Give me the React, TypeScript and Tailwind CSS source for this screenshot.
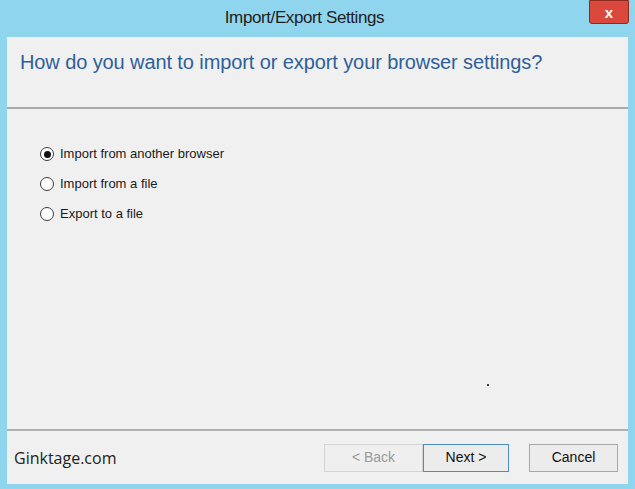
import React from "react";

function Radio({ checked, label }: { checked?: boolean; label: string }) {
  return (
    <div className="flex items-center gap-[6px] h-[20px]">
      <span className="w-[14px] h-[14px] rounded-full border border-[#3a3a3a] bg-white flex items-center justify-center">
        {checked && <span className="w-[7px] h-[7px] rounded-full bg-[#111]" />}
      </span>
      <span className="text-[13px] text-[#1a1a1a]">{label}</span>
    </div>
  );
}

export default function App() {
  return (
    <div
      className="w-[635px] h-[489px] bg-[#8fd5ee] flex flex-col overflow-hidden"
      style={{ fontFamily: '"Liberation Sans", Arial, sans-serif' }}
    >
      {/* title bar */}
      <div className="relative h-[37px] shrink-0 flex items-center justify-center pr-[26px]">
        <span className="text-[17px] text-[#1e1e1e] mt-[-1px] tracking-[-0.4px]">Import/Export Settings</span>
        <div className="absolute right-[6px] top-0 w-[40px] h-[24px] bg-[#d9483b] border border-[#8a2a22] rounded-b-[3px] flex items-center justify-center">
          <span className="text-white font-bold text-[15px] leading-none">x</span>
        </div>
      </div>
      {/* body */}
      <div className="flex-1 mx-[7px] mb-[5px] bg-[#f0f0f0] flex flex-col">
        <div className="h-[72px] border-b-2 border-[#a9a9a9] pt-[10px] pl-[13px]">
          <span className="text-[20px] text-[#2f5f99] tracking-[-0.1px]">
            How do you want to import or export your browser settings?
          </span>
        </div>
        <div className="flex-1 flex flex-col gap-[10px] pt-[35px] pl-[33px] relative">
          <Radio checked label="Import from another browser" />
          <Radio label="Import from a file" />
          <Radio label="Export to a file" />
          <span className="absolute left-[480px] top-[275px] w-[2px] h-[2px] bg-[#444]" />
        </div>
        <div className="h-[55px] border-t-2 border-[#b0b0b0] flex items-center pl-[7px] pr-[10px]">
          <span
            className="text-[16px] text-[#222] flex-1"
            style={{ fontFamily: '"Open Sans", "Noto Sans", sans-serif' }}
          >
            Ginktage.com
          </span>
          <div className="flex items-center">
            <button className="w-[99px] h-[28px] border border-[#d4d4d4] bg-[#efefef] text-[14px] text-[#9a9a9a]">
              &lt; Back
            </button>
            <button className="w-[86px] h-[28px] border border-[#4d8dc6] bg-[#ececec] text-[14px] text-[#111]">
              Next &gt;
            </button>
            <button className="ml-[20px] w-[89px] h-[28px] border border-[#a8a8a8] bg-[#ececec] text-[14px] text-[#111]">
              Cancel
            </button>
          </div>
        </div>
      </div>
    </div>
  );
}
